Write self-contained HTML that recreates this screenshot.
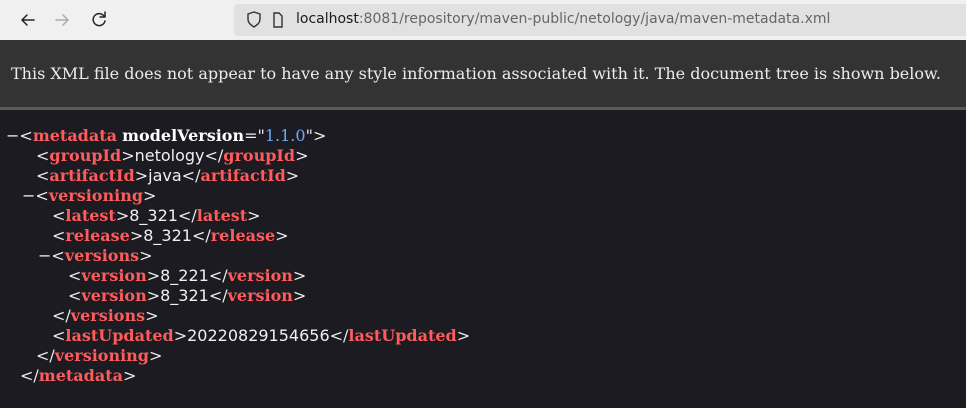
<!DOCTYPE html>
<html><head><meta charset="utf-8"><style>
html,body{margin:0;padding:0;width:966px;height:408px;overflow:hidden;background:#1c1b22}
.tb{position:absolute;left:0;top:0;width:966px;height:40px;background:#f0f0f0}
.url{position:absolute;left:234px;top:4px;width:740px;height:32px;background:#e1e1e1;border-radius:4px}
.urltext{position:absolute;left:296px;top:11px;font:14px "DejaVu Sans",sans-serif;color:#666;white-space:nowrap}
.urltext b{font-weight:normal;color:#1a1a1a}
.hdr{position:absolute;left:0;top:40px;width:966px;height:67px;background:#333333;border-bottom:3px solid #5b5b5b}
.hdr div{position:absolute;left:11px;top:24px;font:16px "DejaVu Serif",serif;color:#ececec;white-space:nowrap}
.code{position:absolute;left:0;top:126px;font:16px "DejaVu Serif",serif;color:#f0f0f0}
.l{height:20px;line-height:20px;white-space:nowrap;position:relative}
.t{color:#ff5b5b;font-weight:bold}
.a{color:#fff;font-weight:bold}
.v{color:#6aa9ff}
.s{font-family:"DejaVu Sans",sans-serif}
</style></head><body>
<div class="tb">
<svg width="230" height="40" style="position:absolute;left:0;top:0">
<g fill="none" stroke-width="1.5" stroke-linecap="round" stroke-linejoin="round">
<path d="M34 20H22M27 15l-5 5 5 5" stroke="#222"/>
<path d="M56 20h12M63 15l5 5-5 5" stroke="#aaa"/>
<path d="M104 16a6 6 0 1 0 1 5" stroke="#222"/><path d="M105 12v5h-5" stroke="#222"/>
</g></svg>
</div>
<div class="url">
<svg width="60" height="32" style="position:absolute;left:0;top:0" fill="none" stroke="#333" stroke-width="1.4">
<path d="M14 10l6-2 6 2v5c0 4-3 6-6 8-3-2-6-4-6-8z"/>
<path d="M40 9h5l3 3v11h-8z"/>
</svg>
</div>
<div class="urltext"><b>localhost</b>:8081/repository/maven-public/netology/java/maven-metadata.xml</div>
<div class="hdr"><div>This XML file does not appear to have any style information associated with it. The document tree is shown below.</div></div>
<div class="code">
<div class="l" style="left:6px">−&lt;<span class="t">metadata</span> <span class="a">modelVersion</span>="<span class="v">1.1.0</span>"&gt;</div>
<div class="l" style="left:36px">&lt;<span class="t">groupId</span>&gt;<span class="s">netology</span>&lt;/<span class="t">groupId</span>&gt;</div>
<div class="l" style="left:36px">&lt;<span class="t">artifactId</span>&gt;<span class="s">java</span>&lt;/<span class="t">artifactId</span>&gt;</div>
<div class="l" style="left:22px">−&lt;<span class="t">versioning</span>&gt;</div>
<div class="l" style="left:52px">&lt;<span class="t">latest</span>&gt;<span class="s">8_321</span>&lt;/<span class="t">latest</span>&gt;</div>
<div class="l" style="left:52px">&lt;<span class="t">release</span>&gt;<span class="s">8_321</span>&lt;/<span class="t">release</span>&gt;</div>
<div class="l" style="left:38px">−&lt;<span class="t">versions</span>&gt;</div>
<div class="l" style="left:68px">&lt;<span class="t">version</span>&gt;<span class="s">8_221</span>&lt;/<span class="t">version</span>&gt;</div>
<div class="l" style="left:68px">&lt;<span class="t">version</span>&gt;<span class="s">8_321</span>&lt;/<span class="t">version</span>&gt;</div>
<div class="l" style="left:52px">&lt;/<span class="t">versions</span>&gt;</div>
<div class="l" style="left:52px">&lt;<span class="t">lastUpdated</span>&gt;<span class="s">20220829154656</span>&lt;/<span class="t">lastUpdated</span>&gt;</div>
<div class="l" style="left:36px">&lt;/<span class="t">versioning</span>&gt;</div>
<div class="l" style="left:20px">&lt;/<span class="t">metadata</span>&gt;</div>
</div>
</body></html>
